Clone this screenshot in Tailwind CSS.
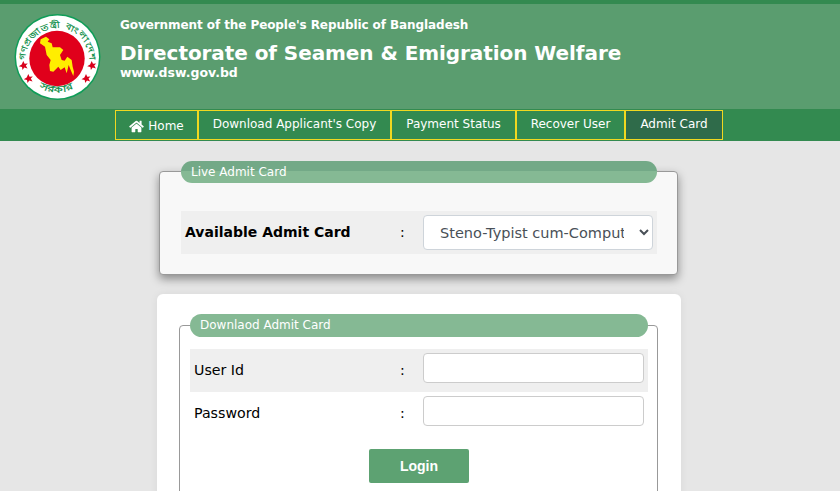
<!DOCTYPE html>
<html lang="en">
<head>
    <meta charset="UTF-8" />
    <title>Directorate of Seamen &amp; Emigration Welfare</title>
    <script src="https://cdn.jsdelivr.net/npm/@tailwindcss/browser@4"></script>
</head>
<body class="bg-[#e6e6e6] h-[491px] overflow-hidden font-['DejaVu_Sans',sans-serif] text-black">
    <header class="h-[109px] border-t-4 border-[#338a50] bg-[#5a9d6f] flex text-white font-bold">
        <svg class="ml-[14px] mt-[10px] w-[87px] h-[87px] shrink-0" viewBox="0 0 87 87">
            <defs>
                <path id="arcTop" d="M11.5 46 A32 32 0 1 1 75.5 46"/>
                <path id="arcBottom" d="M22 71.5 A36 36 0 0 0 65 71.5"/>
            </defs>
            <circle cx="43.5" cy="43" r="43" fill="#0f9d58"/>
            <circle cx="43.5" cy="43" r="41.5" fill="#fff"/>
            <text font-size="8.5" fill="#17924f"><textPath href="#arcTop" textLength="100" lengthAdjust="spacingAndGlyphs">গণপ্রজাতন্ত্রী বাংলাদেশ</textPath></text>
            <text font-size="9" fill="#17924f"><textPath href="#arcBottom" startOffset="4" textLength="36" lengthAdjust="spacingAndGlyphs">সরকার</textPath></text>
            <circle cx="43" cy="44.5" r="27.7" fill="#e0001b"/>
            <g transform="translate(-4 -4) scale(.3333)">
                <path d="M92 88 L108 80 L118 88 L113 95 L125 100 L128 112 L150 112 L160 120 L150 135 L155 150 L164 152 L172 140 L185 150 L188 170 L192 185 L190 198 L182 180 L176 165 L170 190 L164 172 L152 180 L145 170 L130 185 L120 183 L118 165 L122 150 L110 135 L105 110 L90 100 Z" fill="#ffee00"/>
            </g>
            <g fill="#d9001b">
                <polygon points="9.3,47 10.6,49.8 13.8,49.4 11.8,51.5 13.5,54.5 10.3,53.5 8.5,56 8,52.9 4.8,52.3 7.7,50.4"/>
                <polygon points="77.7,47 79,49.8 82.2,49.4 80.2,51.5 81.9,54.5 78.7,53.5 76.9,56 76.4,52.9 73.2,52.3 76.1,50.4"/>
                <polygon points="14.3,60 15.6,62.8 18.8,62.4 16.8,64.5 18.5,67.5 15.3,66.5 13.5,69 13,65.9 9.8,65.3 12.7,63.4"/>
                <polygon points="72,60 73.3,62.8 76.5,62.4 74.5,64.5 76.2,67.5 73,66.5 71.2,69 70.7,65.9 67.5,65.3 70.4,63.4"/>
            </g>
        </svg>
        <div class="ml-[19px] pt-[13px]">
            <p class="text-[12px] leading-[17px] tracking-[-0.08px]">Government of the People's Republic of Bangladesh</p>
            <h1 class="text-[20px] leading-[25px] mt-[7px] tracking-[-0.07px]">Directorate of Seamen &amp; Emigration Welfare</h1>
            <p class="text-[12.5px] leading-[15px] mt-[-1px]">www.dsw.gov.bd</p>
        </div>
    </header>

    <nav class="h-[32px] bg-[#338a50] pl-[115px] pt-[1px] flex text-white text-[12px]">
        <a class="w-[83px] h-[30px] border border-[#f0d820] flex items-center justify-center pt-[2px]">
            <svg class="w-[15px] h-[13px] mr-[4px]" viewBox="0 0 576 512" fill="#fff"><path d="M280 148 96 300v164a16 16 0 0 0 16 16l112-1a16 16 0 0 0 16-16v-95a16 16 0 0 1 16-16h64a16 16 0 0 1 16 16v95a16 16 0 0 0 16 16l112 1a16 16 0 0 0 16-16V300L296 148a12 12 0 0 0-16 0zM571 251l-83-69V44a12 12 0 0 0-12-12h-56a12 12 0 0 0-12 12v73l-90-74a48 48 0 0 0-61 0L5 251a12 12 0 0 0-2 17l26 31a12 12 0 0 0 17 2L280 107a12 12 0 0 1 16 0l235 194a12 12 0 0 0 17-2l25-31a12 12 0 0 0-2-17z"/></svg>
            Home
        </a>
        <a class="w-[193px] h-[30px] border border-[#f0d820] flex items-center justify-center pb-[2px]">Download Applicant's Copy</a>
        <a class="w-[125px] h-[30px] border border-[#f0d820] flex items-center justify-center pb-[2px]">Payment Status</a>
        <a class="w-[109px] h-[30px] border border-[#f0d820] flex items-center justify-center pb-[2px]">Recover User</a>
        <a class="w-[98px] h-[30px] border border-[#f0d820] bg-[#2f6b4a] flex items-center justify-center pb-[2px]">Admit Card</a>
    </nav>

    <main class="w-[524px] ml-[157px]">
        <section class="relative ml-[2px] mt-[30px] w-[519px] h-[104px] bg-[#f8f8f8] border border-[#999] rounded-[4px] shadow-[0_4px_10px_rgba(0,0,0,0.4)] pl-[21px] pr-[20px] pt-[39px]">
            <div class="absolute left-[21px] top-[-11px] w-[476px] h-[22px] rounded-full bg-[linear-gradient(#73a987_0,#73a987_10px,#85b994_10px)] text-white text-[12px] leading-[22px] pl-[10px]">Live Admit Card</div>
            <div class="h-[43px] bg-[#efefef] flex items-center text-[14px]">
                <span class="w-[219px] pl-[4px] font-bold">Available Admit Card</span>
                <span class="w-[23px]">:</span>
                <select class="w-[230px] h-[35px] bg-white border border-[#ced4da] rounded-[4px] pl-[12px] pr-[12px] text-[#495057] text-[14.5px]"><option>Steno-Typist cum-Computer Operator</option></select>
            </div>
        </section>

        <section class="mt-[19px] h-[220px] bg-white rounded-[6px] shadow-[0_0_8px_rgba(0,0,0,0.06)] pl-[22px] pr-[23px] pt-[31px]">
            <div class="relative h-[180px] border border-[#999] rounded-[4px] pl-[10px] pr-[9px] pt-[23px] text-[14.2px]">
                <div class="absolute left-[10px] top-[-12px] w-[458px] h-[23px] rounded-full bg-[#85b994] text-white text-[12px] leading-[23px] pl-[10px]">Downlaod Admit Card</div>
                <div class="h-[43px] bg-[#efefef] flex">
                    <span class="w-[210px] pl-[4px] leading-[42px]">User Id</span>
                    <span class="w-[23px] leading-[42px]">:</span>
                    <input class="w-[221px] h-[30px] mt-[4px] bg-white border border-[#ccc] rounded-[4px]" />
                </div>
                <div class="h-[43px] flex">
                    <span class="w-[210px] pl-[4px] leading-[42px]">Password</span>
                    <span class="w-[23px] leading-[42px]">:</span>
                    <input class="w-[221px] h-[30px] mt-[4px] bg-white border border-[#ccc] rounded-[4px]" />
                </div>
                <button class="block mx-auto mt-[14px] w-[100px] h-[34px] bg-[#5da272] rounded-[2px] text-white font-bold text-[14px] font-['Liberation_Sans',sans-serif]">Login</button>
            </div>
        </section>
    </main>
</body>
</html>
